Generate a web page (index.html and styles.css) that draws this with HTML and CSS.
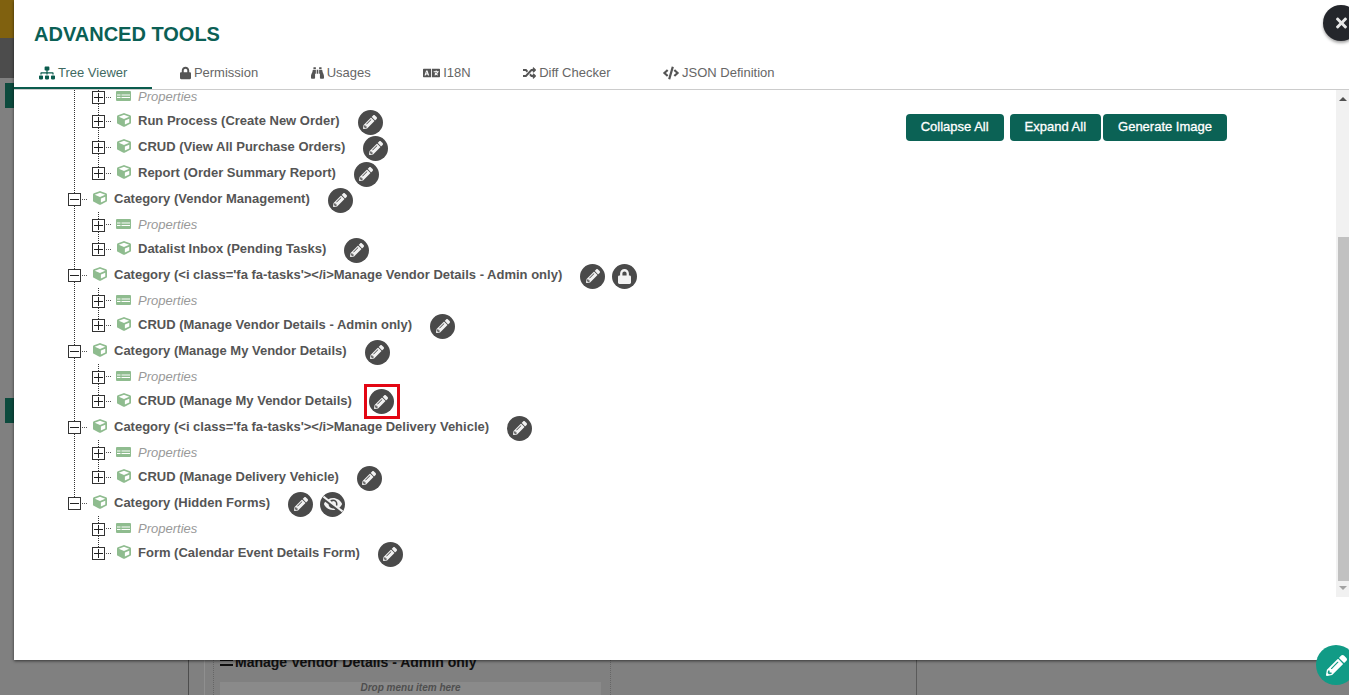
FILE: index.html
```html
<!DOCTYPE html>
<html lang="en">
<head>
    <meta charset="UTF-8">
    <title>Advanced Tools</title>
    <link rel="stylesheet" href="styles.css">
</head>
<body>
    <svg class="defs" width="0" height="0">
        <symbol id="i-pencil" viewBox="0 0 512 512"><path d="M497.9 142.1l-46.1 46.1c-4.7 4.7-12.3 4.7-17 0l-111-111c-4.7-4.7-4.7-12.3 0-17l46.1-46.1c18.7-18.7 49.1-18.7 67.9 0l60.1 60.1c18.8 18.7 18.8 49.1 0 67.9zM284.2 99.8L21.6 362.4.4 483.9c-2.9 16.4 11.4 30.6 27.8 27.8l121.5-21.3 262.6-262.6c4.7-4.7 4.7-12.3 0-17l-111-111c-4.8-4.7-12.4-4.7-17.1 0zM124.1 339.9c-5.5-5.5-5.5-14.3 0-19.8l154-154c5.5-5.5 14.3-5.5 19.8 0s5.5 14.3 0 19.8l-154 154c-5.5 5.5-14.3 5.5-19.8 0zM88 424h48v36.3l-64.5 11.3-31.1-31.1L51.7 376H88v48z"/></symbol>
        <symbol id="i-cube" viewBox="0 0 512 512"><path d="M239.1 6.3l-208 78c-18.7 7-31.1 25-31.1 45v225.1c0 18.2 10.3 34.8 26.5 42.9l208 104c13.5 6.8 29.4 6.8 42.9 0l208-104c16.3-8.1 26.5-24.8 26.5-42.9V129.3c0-20-12.4-37.9-31.1-44.9l-208-78C262 2.2 250 2.2 239.1 6.3zM256 68.4l192 72v1.1l-192 78-192-78v-1.1l192-72zm32 356V275.5l160-65v133.9l-160 80z"/></symbol>
        <symbol id="i-props" viewBox="0 0 30 20"><path fill-rule="evenodd" d="M2 0h26a2 2 0 0 1 2 2v16a2 2 0 0 1-2 2H2a2 2 0 0 1-2-2V2a2 2 0 0 1 2-2zM2 7v2h7V7zm9 0v2h17V7zM2 12v2h7v-2zm9 0v2h17v-2z"/></symbol>
        <symbol id="i-lock" viewBox="0 0 448 512"><path d="M400 224h-24v-72C376 68.2 307.8 0 224 0S72 68.2 72 152v72H48c-26.5 0-48 21.5-48 48v192c0 26.5 21.5 48 48 48h352c26.5 0 48-21.5 48-48V272c0-26.5-21.5-48-48-48zm-104 0H152v-72c0-39.7 32.3-72 72-72s72 32.3 72 72v72z"/></symbol>
        <symbol id="i-eye-slash" viewBox="0 0 640 512"><path d="M320 400c-75.85 0-137.25-58.71-142.9-133.11L72.2 185.82c-13.79 17.3-26.48 35.59-36.72 55.59a32.35 32.35 0 0 0 0 29.19C89.71 376.41 197.07 448 320 448c26.91 0 52.87-4 77.89-10.46L346 397.39a144.13 144.13 0 0 1-26 2.61zm313.82 58.1l-110.55-85.44a331.25 331.25 0 0 0 81.25-102.07 32.35 32.35 0 0 0 0-29.19C550.29 135.59 442.93 64 320 64a308.15 308.15 0 0 0-147.32 37.7L45.46 3.37A16 16 0 0 0 23 6.18L3.37 31.45A16 16 0 0 0 6.18 53.9l588.36 454.73a16 16 0 0 0 22.46-2.81l19.64-25.27a16 16 0 0 0-2.82-22.45zm-183.72-142l-39.3-30.38A94.75 94.75 0 0 0 416 256a94.76 94.76 0 0 0-121.31-92.21A47.65 47.65 0 0 1 304 192a46.64 46.64 0 0 1-1.54 10l-73.61-56.89A142.31 142.31 0 0 1 320 112a143.92 143.92 0 0 1 144 144c0 21.63-5.29 41.79-13.9 60.11z"/></symbol>
        <symbol id="i-sitemap" viewBox="0 0 640 512"><path d="M128 352H32c-17.67 0-32 14.33-32 32v96c0 17.67 14.33 32 32 32h96c17.67 0 32-14.33 32-32v-96c0-17.67-14.33-32-32-32zm-24-80h192v48h48v-48h192v48h48v-57.59c0-21.17-17.23-38.41-38.41-38.41H344v-64h40c17.67 0 32-14.33 32-32V32c0-17.67-14.33-32-32-32H256c-17.67 0-32 14.33-32 32v96c0 17.67 14.33 32 32 32h40v64H94.41C73.23 224 56 241.23 56 262.41V320h48v-48zm264 80h-96c-17.67 0-32 14.33-32 32v96c0 17.67 14.33 32 32 32h96c17.67 0 32-14.33 32-32v-96c0-17.67-14.33-32-32-32zm240 0h-96c-17.67 0-32 14.33-32 32v96c0 17.67 14.33 32 32 32h96c17.67 0 32-14.33 32-32v-96c0-17.67-14.33-32-32-32z"/></symbol>
        <symbol id="i-binoculars" viewBox="0 0 512 512"><path d="M416 48c0-8.84-7.16-16-16-16h-64c-8.84 0-16 7.16-16 16v48h96V48zM63.91 159.99C61.4 253.84 3.46 274.22 0 404v44c0 17.67 14.33 32 32 32h96c17.67 0 32-14.33 32-32V288h32V128H95.84c-17.63 0-31.45 14.37-31.93 31.99zm384.18 0c-.48-17.62-14.3-31.99-31.93-31.99H320v160h32v160c0 17.67 14.33 32 32 32h96c17.67 0 32-14.33 32-32v-44c-3.46-129.78-61.4-150.16-63.91-244.01zM176 32h-64c-8.84 0-16 7.16-16 16v48h96V48c0-8.84-7.16-16-16-16zm48 256h64V128h-64v160z"/></symbol>
        <symbol id="i-language" viewBox="0 0 640 512"><path d="M152.1 236.2c-3.5-12.1-7.8-33.2-7.8-33.2h-.5s-4.3 21.1-7.8 33.2l-11.1 37.5H163zM616 96H336v320h280c13.3 0 24-10.7 24-24V120c0-13.3-10.7-24-24-24zm-24 120c0 6.6-5.4 12-12 12h-11.4c-6.9 23.6-21.7 47.4-42.7 69.9 8.4 6.4 17.1 12.5 26.1 18 5.5 3.4 7.3 10.5 4.1 16.2l-7.9 13.9c-3.4 5.9-10.9 7.8-16.7 4.3-12.6-7.8-24.5-16.1-35.4-24.9-10.9 8.7-22.7 17.1-35.4 24.9-5.8 3.5-13.3 1.6-16.7-4.3l-7.9-13.9c-3.2-5.6-1.4-12.8 4.2-16.2 9.3-5.7 18-11.7 26.1-18-7.9-8.4-14.9-17-21-25.7-4-5.7-2.2-13.6 3.7-17.1l6.5-3.9 7.3-4.3c5.4-3.2 12.4-1.7 16 3.4 5 7 10.8 14 17.4 20.9 13.5-14.2 23.8-28.9 30-43.2H412c-6.6 0-12-5.4-12-12v-16c0-6.6 5.4-12 12-12h64v-16c0-6.6 5.4-12 12-12h16c6.6 0 12 5.4 12 12v16h64c6.6 0 12 5.4 12 12zM0 120v272c0 13.3 10.7 24 24 24h280V96H24c-13.3 0-24 10.7-24 24zm58.9 216.1L116.4 167c1.7-4.9 6.2-8.1 11.4-8.1h32.5c5.1 0 9.7 3.3 11.4 8.1l57.5 169.1c2.6 7.8-3.1 15.9-11.4 15.9h-22.9a12 12 0 0 1-11.5-8.6l-9.4-31.9h-60.2l-9.1 31.8c-1.5 5.1-6.2 8.7-11.5 8.7H70.3c-8.2 0-14-8.1-11.4-15.9z"/></symbol>
        <symbol id="i-random" viewBox="0 0 512 512"><path d="M504.971 359.029c9.373 9.373 9.373 24.569 0 33.941l-80 79.984c-15.01 15.01-40.971 4.49-40.971-16.971V416h-58.785a12.004 12.004 0 0 1-8.773-3.812l-70.556-75.596 53.333-57.143L352 336h32v-39.981c0-21.438 25.943-31.998 40.971-16.971l80 79.981zM12 176h84l52.781 56.551 53.333-57.143-70.556-75.596A11.999 11.999 0 0 0 122.785 96H12c-6.627 0-12 5.373-12 12v56c0 6.627 5.373 12 12 12zm372 0v39.984c0 21.46 25.961 31.98 40.971 16.971l80-79.984c9.373-9.373 9.373-24.569 0-33.941l-80-79.981C409.943 24.021 384 34.582 384 56.019V96h-58.785a12.004 12.004 0 0 0-8.773 3.812L96 336H12c-6.627 0-12 5.373-12 12v56c0 6.627 5.373 12 12 12h110.785c3.326 0 6.503-1.381 8.773-3.812L352 176h32z"/></symbol>
        <symbol id="i-code" viewBox="0 0 640 512"><path d="M278.9 511.5l-61-17.7c-6.4-1.8-10-8.5-8.2-14.9L346.2 8.7c1.8-6.4 8.5-10 14.9-8.2l61 17.7c6.4 1.8 10 8.5 8.2 14.9L293.8 503.3c-1.9 6.4-8.5 10.1-14.9 8.2zm-114-112.2l43.5-46.4c4.6-4.9 4.3-12.7-.8-17.2L117 256l90.6-79.7c5.1-4.5 5.5-12.3.8-17.2l-43.5-46.4c-4.5-4.8-12.1-5.1-17-.5L3.8 247.2c-5.1 4.7-5.1 12.8 0 17.5l144.1 135.1c4.9 4.6 12.5 4.4 17-.5zm327.2.6l144.1-135.1c5.1-4.7 5.1-12.8 0-17.5L492.1 112.1c-4.8-4.5-12.4-4.3-17 .5L431.6 159c-4.6 4.9-4.3 12.7.8 17.2L523 256l-90.6 79.7c-5.1 4.5-5.5 12.3-.8 17.2l43.5 46.4c4.5 4.9 12.1 5.1 17 .6z"/></symbol>
        <symbol id="i-times" viewBox="0 0 352 512"><path d="M242.72 256l100.07-100.07c12.28-12.28 12.28-32.19 0-44.48l-22.24-22.24c-12.28-12.28-32.19-12.28-44.48 0L176 189.28 75.93 89.21c-12.28-12.28-32.19-12.28-44.48 0L9.21 111.45c-12.28 12.28-12.28 32.19 0 44.48L109.28 256 9.21 356.07c-12.28 12.28-12.28 32.19 0 44.48l22.24 22.24c12.28 12.28 32.2 12.28 44.48 0L176 322.72l100.07 100.07c12.28 12.28 32.2 12.28 44.48 0l22.24-22.24c12.28-12.28 12.28-32.19 0-44.48L242.72 256z"/></symbol>
    </svg>

    <!-- dimmed page behind the dialog -->
    <div class="page">
        <div class="page-side">
            <div class="side-gold"></div>
            <div class="side-dark"></div>
            <div class="side-tab"></div>
            <div class="side-tab side-tab-low"></div>
        </div>
        <div class="page-main">
            <div class="page-col page-col-a"></div>
            <div class="page-col page-col-b"></div>
            <div class="page-panel">
                <div class="panel-title"><span class="panel-bars"></span>Manage Vendor Details - Admin only</div>
                <div class="panel-drop">Drop menu item here</div>
            </div>
            <div class="page-col page-col-c"></div>
        </div>
    </div>

    <div class="modal">
        <h1 class="modal-title">ADVANCED TOOLS</h1>
        <div class="tabs">
            <a class="tab active"><svg class="tab-ico ico-sitemap"><use href="#i-sitemap"/></svg>Tree Viewer</a>
            <a class="tab"><svg class="tab-ico ico-lock"><use href="#i-lock"/></svg>Permission</a>
            <a class="tab"><svg class="tab-ico ico-bino"><use href="#i-binoculars"/></svg>Usages</a>
            <a class="tab"><svg class="tab-ico ico-lang"><use href="#i-language"/></svg>I18N</a>
            <a class="tab"><svg class="tab-ico ico-random"><use href="#i-random"/></svg>Diff Checker</a>
            <a class="tab"><svg class="tab-ico ico-code"><use href="#i-code"/></svg>JSON Definition</a>
        </div>

        <div class="modal-body">
            <div class="tree-pane">
                <ul class="tree">
                    <li class="cat">
                        <ul class="kids">
                            <li class="kid"><div class="row row-props row-first"><span class="box plus"></span><span class="dash"></span><svg class="ico-props"><use href="#i-props"/></svg><span class="label props">Properties</span></div></li>
                            <li class="kid"><div class="row"><span class="box plus"></span><span class="dash"></span><svg class="ico-cube"><use href="#i-cube"/></svg><span class="label">Run Process (Create New Order)</span><a class="act"><svg><use href="#i-pencil"/></svg></a></div></li>
                            <li class="kid"><div class="row"><span class="box plus"></span><span class="dash"></span><svg class="ico-cube"><use href="#i-cube"/></svg><span class="label">CRUD (View All Purchase Orders)</span><a class="act"><svg><use href="#i-pencil"/></svg></a></div></li>
                            <li class="kid"><div class="row"><span class="box plus"></span><span class="dash"></span><svg class="ico-cube"><use href="#i-cube"/></svg><span class="label">Report (Order Summary Report)</span><a class="act"><svg><use href="#i-pencil"/></svg></a></div></li>
                        </ul>
                    </li>
                    <li class="cat">
                        <div class="row"><span class="box"></span><span class="dash"></span><svg class="ico-cube"><use href="#i-cube"/></svg><span class="label">Category (Vendor Management)</span><a class="act"><svg><use href="#i-pencil"/></svg></a></div>
                        <ul class="kids">
                            <li class="kid"><div class="row row-props"><span class="box plus"></span><span class="dash"></span><svg class="ico-props"><use href="#i-props"/></svg><span class="label props">Properties</span></div></li>
                            <li class="kid"><div class="row"><span class="box plus"></span><span class="dash"></span><svg class="ico-cube"><use href="#i-cube"/></svg><span class="label">Datalist Inbox (Pending Tasks)</span><a class="act"><svg><use href="#i-pencil"/></svg></a></div></li>
                        </ul>
                    </li>
                    <li class="cat">
                        <div class="row"><span class="box"></span><span class="dash"></span><svg class="ico-cube"><use href="#i-cube"/></svg><span class="label">Category (&lt;i class='fa fa-tasks'&gt;&lt;/i&gt;Manage Vendor Details - Admin only)</span><a class="act"><svg><use href="#i-pencil"/></svg></a><a class="act act-next"><svg class="glyph-lock"><use href="#i-lock"/></svg></a></div>
                        <ul class="kids">
                            <li class="kid"><div class="row row-props"><span class="box plus"></span><span class="dash"></span><svg class="ico-props"><use href="#i-props"/></svg><span class="label props">Properties</span></div></li>
                            <li class="kid"><div class="row"><span class="box plus"></span><span class="dash"></span><svg class="ico-cube"><use href="#i-cube"/></svg><span class="label">CRUD (Manage Vendor Details - Admin only)</span><a class="act"><svg><use href="#i-pencil"/></svg></a></div></li>
                        </ul>
                    </li>
                    <li class="cat">
                        <div class="row"><span class="box"></span><span class="dash"></span><svg class="ico-cube"><use href="#i-cube"/></svg><span class="label">Category (Manage My Vendor Details)</span><a class="act"><svg><use href="#i-pencil"/></svg></a></div>
                        <ul class="kids">
                            <li class="kid"><div class="row row-props"><span class="box plus"></span><span class="dash"></span><svg class="ico-props"><use href="#i-props"/></svg><span class="label props">Properties</span></div></li>
                            <li class="kid"><div class="row"><span class="box plus"></span><span class="dash"></span><svg class="ico-cube"><use href="#i-cube"/></svg><span class="label">CRUD (Manage My Vendor Details)</span><span class="marked"><a class="act"><svg><use href="#i-pencil"/></svg></a></span></div></li>
                        </ul>
                    </li>
                    <li class="cat">
                        <div class="row"><span class="box"></span><span class="dash"></span><svg class="ico-cube"><use href="#i-cube"/></svg><span class="label">Category (&lt;i class='fa fa-tasks'&gt;&lt;/i&gt;Manage Delivery Vehicle)</span><a class="act"><svg><use href="#i-pencil"/></svg></a></div>
                        <ul class="kids">
                            <li class="kid"><div class="row row-props"><span class="box plus"></span><span class="dash"></span><svg class="ico-props"><use href="#i-props"/></svg><span class="label props">Properties</span></div></li>
                            <li class="kid"><div class="row"><span class="box plus"></span><span class="dash"></span><svg class="ico-cube"><use href="#i-cube"/></svg><span class="label">CRUD (Manage Delivery Vehicle)</span><a class="act"><svg><use href="#i-pencil"/></svg></a></div></li>
                        </ul>
                    </li>
                    <li class="cat">
                        <div class="row"><span class="box"></span><span class="dash"></span><svg class="ico-cube"><use href="#i-cube"/></svg><span class="label">Category (Hidden Forms)</span><a class="act"><svg><use href="#i-pencil"/></svg></a><a class="act act-next"><svg class="glyph-eye"><use href="#i-eye-slash"/></svg></a></div>
                        <ul class="kids">
                            <li class="kid"><div class="row row-props"><span class="box plus"></span><span class="dash"></span><svg class="ico-props"><use href="#i-props"/></svg><span class="label props">Properties</span></div></li>
                            <li class="kid"><div class="row"><span class="box plus"></span><span class="dash"></span><svg class="ico-cube"><use href="#i-cube"/></svg><span class="label">Form (Calendar Event Details Form)</span><a class="act"><svg><use href="#i-pencil"/></svg></a></div></li>
                        </ul>
                    </li>
                </ul>
                <div class="tree-tools">
                    <button class="btn">Collapse All</button>
                    <button class="btn btn-next">Expand All</button>
                    <button class="btn btn-last">Generate Image</button>
                </div>
            </div>
            <div class="scrollbar">
                <span class="arrow arrow-up"></span>
                <div class="scroll-track"><div class="scroll-thumb"></div></div>
                <span class="arrow arrow-down"></span>
            </div>
        </div>
    </div>

    <a class="close-btn"><svg><use href="#i-times"/></svg></a>
    <a class="fab"><svg><use href="#i-pencil"/></svg></a>
</body>
</html>
```

FILE: styles.css
```css
html, body {
    margin: 0;
    height: 100%;
    overflow: hidden;
}
body {
    font-family: "Liberation Sans", Arial, sans-serif;
    background-color: #808080;
}
.defs {
    display: block;
    height: 0;
}
ul {
    list-style: none;
    margin: 0;
    padding: 0;
}

/* dimmed page */
.page {
    display: flex;
    height: 695px;
    overflow: hidden;
}
.page-side {
    width: 14px;
    display: flex;
    flex-direction: column;
}
.side-gold {
    height: 38px;
    background-color: #80610f;
}
.side-dark {
    height: 40px;
    background-color: #4c4c4c;
}
.side-tab {
    width: 9px;
    height: 25px;
    margin: 5px 0 0 5px;
    background-color: #0c4a3d;
}
.side-tab-low {
    margin-top: 290px;
}
.page-main {
    flex: 1;
    display: flex;
    align-items: flex-end;
}
.page-col {
    height: 60px;
}
.page-col-a {
    width: 174px;
    border-right: 1px solid #4d4d4d;
}
.page-col-b {
    width: 15px;
    border-right: 1px solid #8f8f8f;
}
.page-panel {
    width: 398px;
    height: 40px;
    margin-left: 8px;
    padding: 0 9px 0 6px;
    box-sizing: border-box;
    border-left: 1px dotted #666;
    border-right: 1px dotted #666;
}
.panel-title {
    display: flex;
    align-items: center;
    height: 16px;
    margin-top: -1px;
    font-size: 14px;
    font-weight: bold;
    color: #111;
}
.panel-bars {
    width: 13px;
    height: 3px;
    margin: 0 2px 0 0;
    border-top: 2px solid #111;
    border-bottom: 2px solid #111;
}
.panel-drop {
    height: 13px;
    margin-top: 12px;
    line-height: 12px;
    text-align: center;
    font-size: 10px;
    font-weight: bold;
    font-style: italic;
    color: #4f4f4f;
    background-color: #8a8a8a;
}
.page-col-c {
    width: 305px;
    border-right: 1px solid #5a5a5a;
}

/* dialog */
.modal {
    position: absolute;
    left: 14px;
    right: 0;
    top: 0;
    height: 660px;
    display: flex;
    flex-direction: column;
    background-color: #fff;
    box-shadow: 0 1px 3px rgba(0, 0, 0, 0.6);
}
.modal-title {
    margin: 22px 0 0 20px;
    font-size: 20px;
    line-height: 24px;
    font-weight: bold;
    color: #0b6055;
}
.tabs {
    display: flex;
    gap: 2.5px;
    height: 44px;
    box-sizing: border-box;
    border-bottom: 1px solid #ccc;
}
.tab {
    display: flex;
    align-items: flex-end;
    padding: 0 25px 8px;
    height: 43px;
    box-sizing: border-box;
    font-size: 13px;
    line-height: 16px;
    color: #666;
}
.tab.active {
    color: #3f6a62;
    border-bottom: 2px solid #0b5c4e;
    padding-bottom: 6px;
}
.tab-ico {
    height: 14px;
    margin: 0 3px 1px 0;
    fill: #555;
}
.ico-sitemap { width: 16px; fill: #0b5c4e; }
.ico-lock { width: 11px; }
.ico-bino { width: 13px; }
.ico-lang { width: 17px; }
.ico-random { width: 13px; }
.ico-code { width: 16px; }

.modal-body {
    display: flex;
    height: 507px;
}
.tree-pane {
    flex: 1;
    display: flex;
    justify-content: space-between;
    overflow: hidden;
}
.tree {
    padding-left: 54px;
}

/* dotted guides run down the li, the last one stops at its box */
.cat, .kid {
    background-image: repeating-linear-gradient(to bottom, #333 0 1px, transparent 1px 2px);
    background-repeat: no-repeat;
    background-position: 6px 0;
    background-size: 1px 100%;
}
.cat:last-child, .kid:last-child {
    background-size: 1px 8px;
}
.kids {
    padding-left: 24px;
}
.row {
    display: flex;
    align-items: center;
    height: 26px;
}
.row-props {
    height: 24px;
}
.row-props .box {
    margin-top: 2px;
}
/* the list is scrolled, only the bottom of this row shows */
.row-first {
    height: 18px;
    align-items: flex-start;
}
.row-first .box {
    margin-top: 1px;
}
.row-first .dash {
    margin-top: 7px;
}
.row-first .ico-props {
    margin-top: 1px;
}
.row-first .label.props {
    margin-top: 0;
    line-height: 14px;
}
.box {
    width: 13px;
    height: 13px;
    flex: none;
    box-sizing: border-box;
    border: 1px solid #333;
    background: linear-gradient(#222, #222) center / 9px 1px no-repeat, #fff;
}
.box.plus {
    background: linear-gradient(#222, #222) center / 9px 1px no-repeat, linear-gradient(#222, #222) center / 1px 9px no-repeat, #fff;
}
.dash {
    width: 6px;
    height: 1px;
    margin: 0 5px 0 1px;
    flex: none;
    background-image: repeating-linear-gradient(to right, #555 0 1px, transparent 1px 2px);
}
.ico-cube {
    width: 14px;
    height: 14px;
    flex: none;
    margin-bottom: 2px;
    fill: #8fbc8f;
}
.ico-props {
    width: 15px;
    height: 10px;
    flex: none;
    margin-left: -1px;
    fill: #8fbc8f;
}
.label {
    margin: 0 0 1px 7px;
    font-size: 13px;
    line-height: 16px;
    font-weight: bold;
    color: #555;
    white-space: nowrap;
}
.label.props {
    margin-top: 2px;
    margin-bottom: 0;
    font-weight: normal;
    font-style: italic;
    color: #999;
}
.act {
    width: 25px;
    height: 25px;
    flex: none;
    display: flex;
    align-items: center;
    justify-content: center;
    margin: 2px 0 0 18px;
    border-radius: 50%;
    background-color: #4a4a4a;
}
.act svg {
    width: 14px;
    height: 14px;
    fill: #f2f2f2;
}
.act svg.glyph-lock {
    width: 13px;
    height: 15px;
}
.act svg.glyph-eye {
    width: 20px;
    height: 16px;
}
.act-next {
    margin-left: 7px;
}
.marked {
    display: flex;
    margin: 1px 0 0 12px;
    padding: 2px 3px 2px 2px;
    border: 3px solid #e30613;
}
.marked .act {
    margin: 0;
}

.tree-tools {
    display: flex;
    align-items: flex-start;
    margin: 24px 109px 0 0;
}
.btn {
    height: 27px;
    padding: 0 15px 2px;
    border: none;
    border-radius: 4px;
    font-family: inherit;
    font-size: 13px;
    -webkit-text-stroke: 0.3px #fff;
    color: #fff;
    background-color: #0b6255;
}
.btn-next {
    margin-left: 6px;
}
.btn-last {
    margin-left: 2px;
}

.scrollbar {
    width: 13px;
    display: flex;
    flex-direction: column;
    align-items: center;
    background-color: #f1f1f1;
}
.arrow {
    flex: none;
    width: 0;
    height: 0;
    border-left: 4px solid transparent;
    border-right: 4px solid transparent;
}
.arrow-up {
    margin: 7px 0 0;
    border-bottom: 4px solid #505050;
}
.arrow-down {
    margin: 0 0 7px;
    border-top: 4px solid #a3a3a3;
}
.scroll-track {
    flex: 1;
    width: 100%;
    padding: 136px 0 5px 2px;
    box-sizing: border-box;
}
.scroll-thumb {
    height: 100%;
    background-color: #c1c1c1;
}

/* floating round buttons */
.close-btn {
    position: absolute;
    left: 1323px;
    top: 5px;
    width: 36px;
    height: 36px;
    display: flex;
    align-items: center;
    justify-content: center;
    border-radius: 50%;
    background-color: #24262b;
    box-shadow: 0 2px 3px rgba(0, 0, 0, 0.35);
}
.close-btn svg {
    width: 11px;
    height: 16px;
    fill: #e8e8e8;
}
.fab {
    position: absolute;
    left: 1316px;
    top: 645px;
    width: 40px;
    height: 40px;
    display: flex;
    align-items: center;
    justify-content: center;
    border-radius: 50%;
    background-color: #119b86;
}
.fab svg {
    width: 21px;
    height: 21px;
    fill: #fff;
}
```
